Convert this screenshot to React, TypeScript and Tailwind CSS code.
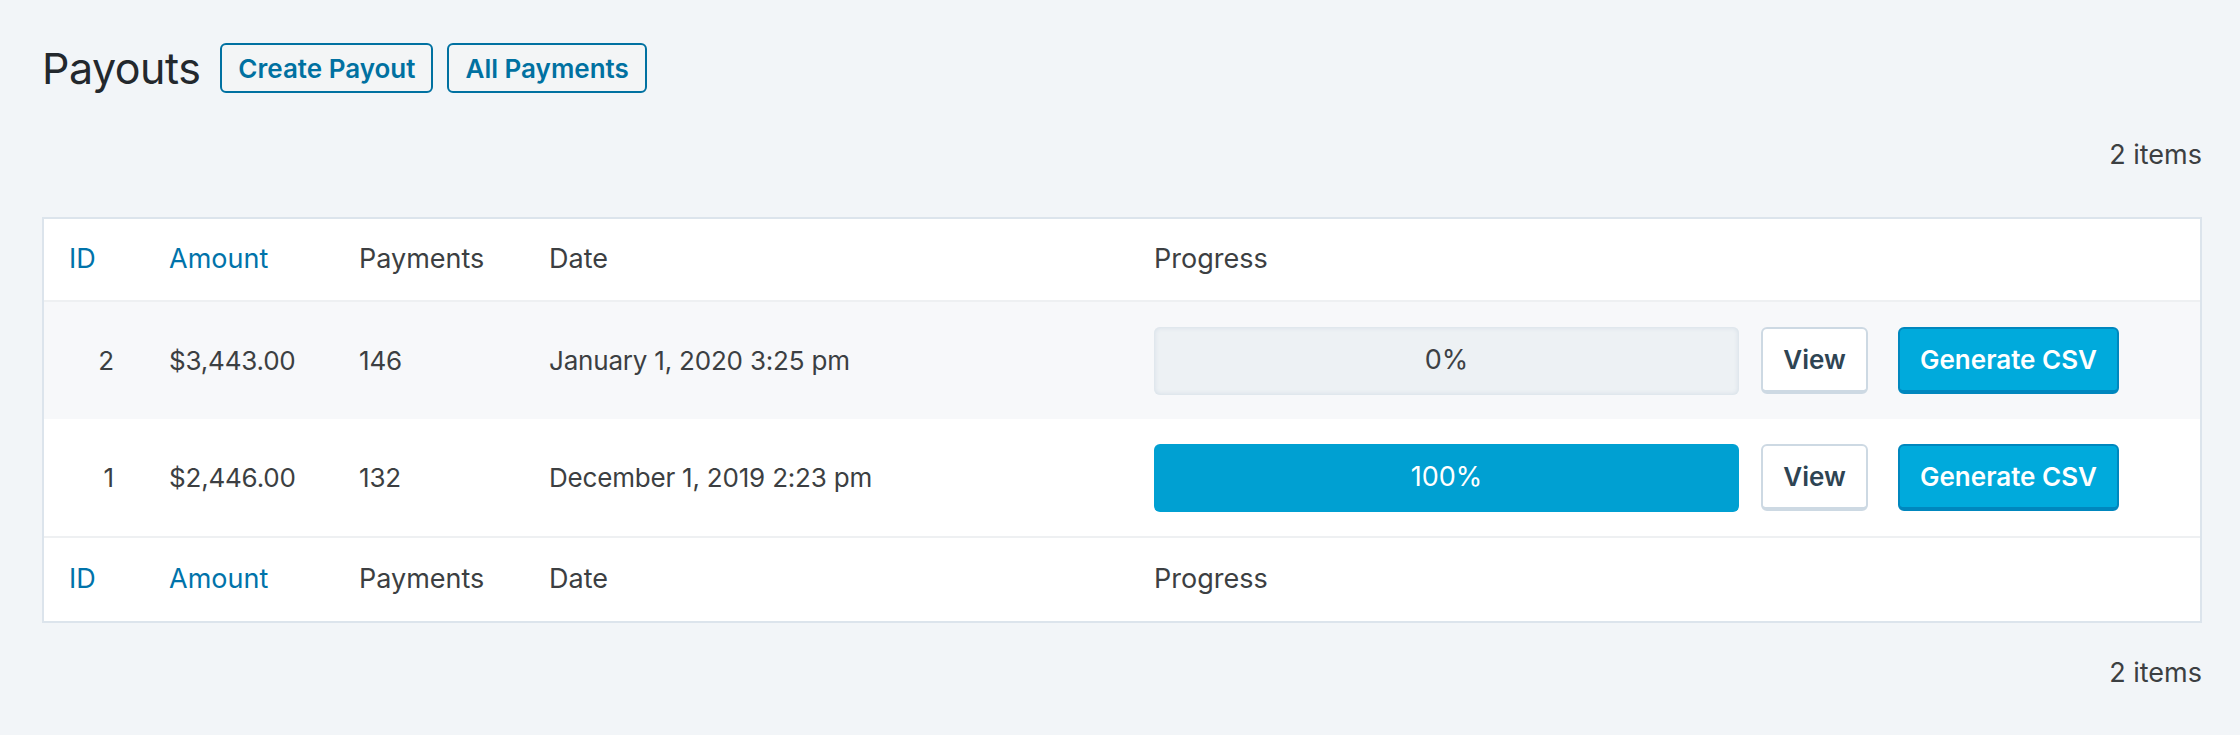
import * as React from "react";

type Payout = {
  id: number;
  amount: string;
  payments: number;
  date: string;
  progress: number;
};

const payouts: Payout[] = [
  { id: 2, amount: "$3,443.00", payments: 146, date: "January 1, 2020 3:25 pm", progress: 0 },
  { id: 1, amount: "$2,446.00", payments: 132, date: "December 1, 2019 2:23 pm", progress: 100 },
];

const cols = "grid grid-cols-[100px_190px_190px_605px_1fr] items-center";

function HeaderRow({ top }: { top?: boolean }) {
  return (
    <div
      className={
        cols +
        " bg-white text-[27px] " +
        (top ? "h-[83px] border-b-2 border-[#eef0f2]" : "h-[85px] border-t-2 border-[#eef0f2]")
      }
    >
      <div className="pl-[25px] text-[#0073aa]">ID</div>
      <div className="pl-[25px] text-[#0073aa]">Amount</div>
      <div className="pl-[25px]">Payments</div>
      <div className="pl-[25px]">Date</div>
      <div className="pl-[25px]">Progress</div>
    </div>
  );
}

function ProgressBar({ value }: { value: number }) {
  const done = value >= 100;
  return (
    <div
      className={
        "flex h-[68px] w-[585px] items-center justify-center rounded-[6px] text-[27px] " +
        (done
          ? "bg-[#00a0d2] text-white"
          : "bg-[#edf1f4] text-[#3d4145] shadow-[inset_0_0_4px_1px_#d7e0e8]")
      }
    >
      {value}%
    </div>
  );
}

export default function App() {
  return (
    <div
      className="min-h-[735px] bg-[#f2f5f8] pl-[42px] pr-[38px] text-[28px] text-[#3c3f42]"
      style={{ fontFamily: "Inter, 'Noto Sans', Arial, sans-serif" }}
    >
      <div className="flex items-center pt-[43px]">
        <h1 className="mr-[20px] text-[43px] font-normal leading-[50px] tracking-[-0.5px] text-[#23282d]">
          Payouts
        </h1>
        <div className="flex gap-[14px]">
          <button className="h-[50px] rounded-[6px] border-2 border-[#0071a1] bg-[#f3f5f6] px-[16px] text-[26px] font-semibold text-[#0071a1]">
            Create Payout
          </button>
          <button className="h-[50px] rounded-[6px] border-2 border-[#0071a1] bg-[#f3f5f6] px-[16px] text-[26px] font-semibold text-[#0071a1]">
            All Payments
          </button>
        </div>
      </div>

      <div className="mt-[42px] h-[40px] text-right text-[27px] leading-[40px]">2 items</div>

      <div className="mt-[42px] border-2 border-[#dce4ec] bg-white">
        <HeaderRow top />
        {payouts.map((p, i) => (
          <div
            key={p.id}
            className={
              cols +
              " h-[117px] text-[26px] tracking-[-0.2px] " +
              (i % 2 === 0 ? "bg-[#f7f8fa]" : "bg-white")
            }
          >
            <div className="pr-[30px] text-right">{p.id}</div>
            <div className="pl-[25px]">{p.amount}</div>
            <div className="pl-[25px]">{p.payments}</div>
            <div className="pl-[25px]">{p.date}</div>
            <div className="flex items-center pl-[25px] tracking-normal">
              <ProgressBar value={p.progress} />
              <button className="ml-[22px] h-[67px] w-[107px] rounded-[6px] border-2 border-b-4 border-[#cdd9e3] bg-white text-[26px] font-semibold text-[#2e4453]">
                View
              </button>
              <button className="ml-[30px] h-[67px] w-[221px] rounded-[6px] border-2 border-b-4 border-[#0087be] bg-[#00aadc] text-[26px] font-semibold text-white">
                Generate CSV
              </button>
            </div>
          </div>
        ))}
        <HeaderRow />
      </div>

      <div className="mt-[30px] h-[40px] text-right text-[27px] leading-[40px]">2 items</div>
    </div>
  );
}
